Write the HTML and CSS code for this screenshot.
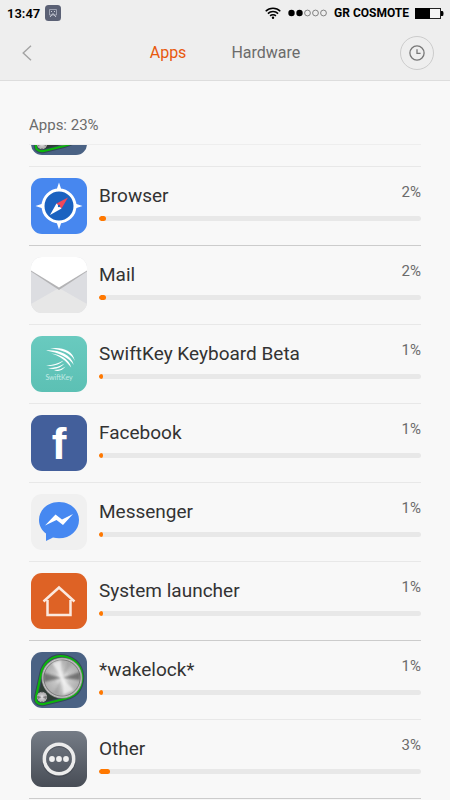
FILE: index.html
```html
<!DOCTYPE html>
<html lang="en">
<head>
  <meta charset="UTF-8">
  <meta name="viewport" content="width=device-width, initial-scale=1">
  <title>Battery usage</title>
  <link rel="stylesheet" href="styles.css">
</head>
<body>

<header class="header">
  <div class="status-bar">
    <span class="time">13:47</span>
    <svg class="notification" viewBox="0 0 16 16" aria-hidden="true">
      <rect width="16" height="16" rx="3.5" fill="#5b6175"/>
      <path d="M4.500 4.500h7v5.500h-7z" fill="none" stroke="#aeb3c2" stroke-width=".8"/>
      <path d="M6 6.500h1M9 6.500h1M5 12l3-3.500 3 3.500" fill="none" stroke="#d5d8e0" stroke-width=".9"/>
    </svg>
    <svg class="wifi" viewBox="0 0 16 12" aria-hidden="true">
      <g fill="none" stroke="#000" stroke-width="1.5">
        <path d="M.7 4.2a10.4 10.4 0 0 1 14.6 0"/>
        <path d="M2.9 6.6a7.2 7.2 0 0 1 10.2 0"/>
        <path d="M5.1 8.9a4.1 4.1 0 0 1 5.8 0"/>
      </g>
      <circle cx="8" cy="10.7" r="1.2"/>
    </svg>
    <svg class="signal" viewBox="0 0 39 8" aria-hidden="true">
      <circle cx="3.5" cy="4" r="3.2"/>
      <circle cx="11.5" cy="4" r="3.2"/>
      <g fill="none" stroke="#555" stroke-width=".7">
        <circle cx="19.5" cy="4" r="2.9"/>
        <circle cx="27.5" cy="4" r="2.9"/>
        <circle cx="35.5" cy="4" r="2.9"/>
      </g>
    </svg>
    <span class="carrier">GR COSMOTE</span>
    <svg class="battery" viewBox="0 0 29 11" aria-hidden="true">
      <rect x=".5" y=".5" width="25" height="10" fill="#f4f4f4" stroke="#222"/>
      <rect width="15" height="11"/>
      <path d="M26 3h1.5q1 0 1 2.5t-1 2.5H26z"/>
    </svg>
  </div>

  <nav class="nav">
    <button class="back-btn" aria-label="Back">
      <svg viewBox="0 0 10 16"><path d="M9 .7L1.2 8 9 15.3" fill="none" stroke="#a3a3a3" stroke-width="1.4"/></svg>
    </button>
    <div class="tabs">
      <a class="tab active" href="#apps">Apps</a>
      <a class="tab" href="#hardware">Hardware</a>
    </div>
    <button class="history-btn" aria-label="History">
      <svg viewBox="0 0 16 16"><g fill="none" stroke="#777" stroke-width="1.3"><circle cx="8" cy="8" r="7.1"/><path d="M8 4.2V8.3h3.6"/></g></svg>
    </button>
  </nav>
</header>

<main class="content" id="apps">
  <h1 class="summary">Apps: 23%</h1>

  <ul class="app-list">
    <!-- row scrolled under the summary -->
    <li class="app cut">
      <svg class="icon" viewBox="0 0 56 56" aria-hidden="true">
        <defs>
          <radialGradient id="knobShade" cx=".5" cy=".5" r=".5">
            <stop offset="0" stop-color="#f4f4f4"/>
            <stop offset=".4" stop-color="#c6c6c6"/>
            <stop offset=".84" stop-color="#b0b0b0"/>
            <stop offset=".88" stop-color="#7d7d7d"/>
            <stop offset=".93" stop-color="#c4c4c4"/>
            <stop offset="1" stop-color="#8a8a8a"/>
          </radialGradient>
          <filter id="soften"><feGaussianBlur stdDeviation="1"/></filter>
        </defs>
        <g id="knob">
          <rect width="56" height="56" rx="11" fill="#4a6284"/>
          <path d="M11 18C16 6 26 2 36 5c12 4 18 15 14 28-3 9-9 12-17 14l-20 5c-6 1-9-2-8-7z" fill="#2f3d35" stroke="#34465c" stroke-width="4"/>
          <path d="M11 18C16 6 26 2 36 5c12 4 18 15 14 28-3 9-9 12-17 14l-20 5c-6 1-9-2-8-7z" fill="none" stroke="#0bb50b" stroke-width="2.2"/>
          <circle cx="31" cy="26" r="20.5" fill="url(#knobShade)"/>
          <g filter="url(#soften)">
            <path d="M31 26L13 21v9zM31 26l18-6v8z" fill="#444" opacity=".6"/>
            <path d="M31 26L22 41l5 2zM31 26l5-17 5 3z" fill="#777" opacity=".25"/>
            <path d="M31 26L21 11l9-3zM31 26l1 17 11-5z" fill="#fff" opacity=".65"/>
          </g>
          <circle cx="11" cy="45" r="5.2" fill="url(#knobShade)"/>
          <path d="M11 45l-4-1v3zM11 45l4-1v3z" fill="#555" opacity=".6"/>
        </g>
      </svg>
    </li>

    <li class="app strong">
      <svg class="icon" viewBox="0 0 56 56" aria-hidden="true">
        <rect width="56" height="56" rx="11" fill="#4787ef"/>
        <path d="M28 4.5l3 9h-6zM28 51.5l3-9h-6zM4.500 28l9-3v6zM51.500 28l-9-3v6z" fill="#fff"/>
        <circle cx="28" cy="28" r="16" fill="#1b62c0" stroke="#fff" stroke-width="3"/>
        <path d="M37 19.500L30.500 30.500 25.500 25.500z" fill="#f0485a"/>
        <path d="M19 37L25.500 25.500 30.500 30.500z" fill="#fff"/>
        <circle cx="28" cy="28" r="1.200" fill="#1b62c0"/>
      </svg>
      <div class="info">
        <label class="name" for="browser">Browser</label>
        <span class="percent">2%</span>
        <progress class="usage" id="browser" value="2" max="90"></progress>
      </div>
    </li>

    <li class="app">
      <svg class="icon" viewBox="0 0 56 56" aria-hidden="true">
        <clipPath id="mailShape"><rect width="56" height="56" rx="11"/></clipPath>
        <g clip-path="url(#mailShape)">
          <rect width="56" height="56" fill="#dcdde1"/>
          <path d="M0 47L28 31 56 47V56H0z" fill="#e7e7e7"/>
          <path d="M0 14.500L28 33 56 14.500V13H0z" fill="#b3b3b5"/>
          <path d="M0 0H56V13.500L28 30.500 0 13.500z" fill="#fff"/>
        </g>
      </svg>
      <div class="info">
        <label class="name" for="mail">Mail</label>
        <span class="percent">2%</span>
        <progress class="usage" id="mail" value="2" max="90"></progress>
      </div>
    </li>

    <li class="app">
      <svg class="icon" viewBox="0 0 56 56" aria-hidden="true">
        <linearGradient id="swiftBg" x2="0" y2="1"><stop stop-color="#69cabf"/><stop offset="1" stop-color="#5cc0b4"/></linearGradient>
        <rect width="56" height="56" rx="11" fill="url(#swiftBg)"/>
        <g fill="#fff">
          <path d="M19 12.500C29 10.500 42 13.500 43.800 25c-3-7.500-13-11.500-24.800-12.500z"/>
          <path d="M15 14.500c11-1 25 3 27.800 14.500-5-7.500-15-12.500-27.800-14.500z"/>
          <path d="M20 17.500c9 1 18 5 20.200 14-5-6.500-11-11.500-20.200-14z"/>
          <path d="M15 29.500c7-.5 12-2 17.500-5-4 4-11 6.500-17.500 5z"/>
          <path d="M17 32c7 0 11.500-1.500 16.500-4.500-4 4.500-10 7-16.500 4.500z"/>
          <path d="M23 34c5 0 8-1 11.500-3.500-3 4-7 5.500-11.500 3.500z"/>
        </g>
        <text class="swift-text" x="28" y="43.500" text-anchor="middle">SwiftKey</text>
      </svg>
      <div class="info">
        <label class="name" for="swiftkey">SwiftKey Keyboard Beta</label>
        <span class="percent">1%</span>
        <progress class="usage" id="swiftkey" value="1" max="90"></progress>
      </div>
    </li>

    <li class="app">
      <svg class="icon" viewBox="0 0 56 56" aria-hidden="true">
        <rect width="56" height="56" rx="11" fill="#435f9b"/>
        <text class="fb-text" x="28" y="44" text-anchor="middle">f</text>
      </svg>
      <div class="info">
        <label class="name" for="facebook">Facebook</label>
        <span class="percent">1%</span>
        <progress class="usage" id="facebook" value="1" max="90"></progress>
      </div>
    </li>

    <li class="app">
      <svg class="icon" viewBox="0 0 56 56" aria-hidden="true">
        <rect width="56" height="56" rx="11" fill="#f0f0f0"/>
        <path d="M28 8C16.500 8 8 16 8 26c0 5.500 2.500 10 7 13.500V47l7-3.500c2 .6 4 .8 6 .8 11.500 0 20-8 20-18.300S39.500 8 28 8z" fill="#4688f1"/>
        <path d="M14 31.500L24.500 20.500 31 25.500 42 20 32 31 25.500 26z" fill="#fff"/>
      </svg>
      <div class="info">
        <label class="name" for="messenger">Messenger</label>
        <span class="percent">1%</span>
        <progress class="usage" id="messenger" value="1" max="90"></progress>
      </div>
    </li>

    <li class="app strong">
      <svg class="icon" viewBox="0 0 56 56" aria-hidden="true">
        <rect width="56" height="56" rx="11" fill="#de6225"/>
        <path d="M12.500 28.500L28 14.500 43.500 28.500M16.500 27V42H39.500V27" fill="none" stroke="#fbe9df" stroke-width="2.500"/>
      </svg>
      <div class="info">
        <label class="name" for="launcher">System launcher</label>
        <span class="percent">1%</span>
        <progress class="usage" id="launcher" value="1" max="90"></progress>
      </div>
    </li>

    <li class="app">
      <svg class="icon" viewBox="0 0 56 56" aria-hidden="true"><use href="#knob"/></svg>
      <div class="info">
        <label class="name" for="wakelock">*wakelock*</label>
        <span class="percent">1%</span>
        <progress class="usage" id="wakelock" value="1" max="90"></progress>
      </div>
    </li>

    <li class="app strong">
      <svg class="icon" viewBox="0 0 56 56" aria-hidden="true">
        <linearGradient id="otherBg" x2="0" y2="1"><stop stop-color="#757c86"/><stop offset="1" stop-color="#484d56"/></linearGradient>
        <rect width="56" height="56" rx="11" fill="url(#otherBg)"/>
        <circle cx="28" cy="29.500" r="15" fill="none" stroke="#3c4047" stroke-width="3.500" opacity=".5"/>
        <circle cx="28" cy="28" r="14.700" fill="none" stroke="#ececec" stroke-width="3.500"/>
        <g fill="#f0f0f0"><circle cx="21" cy="28" r="2.900"/><circle cx="28" cy="28" r="2.900"/><circle cx="35" cy="28" r="2.900"/></g>
      </svg>
      <div class="info">
        <label class="name" for="other">Other</label>
        <span class="percent">3%</span>
        <progress class="usage" id="other" value="3" max="90"></progress>
      </div>
    </li>
  </ul>
</main>

</body>
</html>
```
FILE: styles.css
```css
* {
  box-sizing: border-box;
}

body {
  margin: 0;
  font-family: Roboto, sans-serif;
  background-color: #f8f8f8;
  color: #333;
}

.header {
  background-color: #eee;
  border-bottom: 1px solid #ddd;
}

/* Status bar */
.status-bar {
  display: flex;
  align-items: center;
  height: 26px;
  padding: 0 6px 0 7px;
  color: #000;
  font-size: 13px;
  font-weight: 600;
}

.notification {
  width: 16px;
  height: 16px;
  margin-left: 5px;
}

.wifi {
  width: 16px;
  height: 12px;
  margin-left: auto;
}

.signal {
  width: 39px;
  height: 8px;
  margin: 0 7px;
}

.carrier {
  font-size: 12px;
  font-weight: 700;
}

.battery {
  width: 29px;
  height: 11px;
  margin-left: 6px;
}

/* Navigation */
.nav {
  display: grid;
  grid-template-columns: 34px 1fr 34px;
  align-items: center;
  height: 54px;
  padding: 0 16px;
}

.nav button {
  display: flex;
  align-items: center;
  justify-content: center;
  height: 34px;
  padding: 0;
  border: none;
  background: none;
  cursor: pointer;
}

.back-btn svg {
  width: 10px;
  height: 16px;
  margin-right: 12px;
}

.nav .history-btn {
  border: 1px solid #ccc;
  border-radius: 50%;
}

.history-btn svg {
  width: 16px;
  height: 16px;
}

.tabs {
  display: flex;
  justify-content: center;
  gap: 45px;
}

.tab {
  color: #6b6b6b;
  font-size: 16px;
  line-height: 20px;
  text-decoration: none;
}

.tab.active {
  color: #e8590c;
}

/* App list */
.content {
  padding: 0 29px;
}

.summary {
  margin: 0;
  padding-top: 34px;
  height: 63px;
  font-size: 15px;
  font-weight: 400;
  line-height: 20px;
  color: #6b6b6b;
}

.app-list {
  margin: 0;
  padding: 0;
  list-style: none;
  border-top: 1px solid #eee;
}

.app {
  display: flex;
  gap: 12px;
  height: 79px;
  padding: 11px 0 11px 2px;
  border-bottom: 1px solid #e8e8e8;
}

.app.strong {
  border-bottom-color: #ccc;
}

.app.cut {
  align-items: flex-end;
  height: 22px;
  padding-top: 0;
  overflow: hidden;
}

.icon {
  flex: none;
  width: 56px;
  height: 56px;
}

.info {
  flex: 1;
  display: grid;
  grid-template-columns: 1fr auto;
  grid-template-rows: 38px 5px;
}

.name {
  font-size: 19px;
  line-height: 36px;
}

.percent {
  font-size: 15px;
  line-height: 28px;
  color: #6b6b6b;
}

.usage {
  grid-column: 1 / 3;
  display: block;
  width: 100%;
  height: 5px;
  border: none;
  border-radius: 3px;
  overflow: hidden;
  appearance: none;
}

.usage::-webkit-progress-bar {
  background-color: #e8e8e8;
}

.usage::-webkit-progress-value {
  background-color: #ff7800;
  border-radius: 3px;
}

/* Lettering inside the icons */
.swift-text {
  font-family: Lato, sans-serif;
  font-size: 7px;
  fill: #c5ebe6;
}

.fb-text {
  font-family: "Liberation Sans", sans-serif;
  font-size: 44px;
  font-weight: 700;
  fill: #fff;
}
```
